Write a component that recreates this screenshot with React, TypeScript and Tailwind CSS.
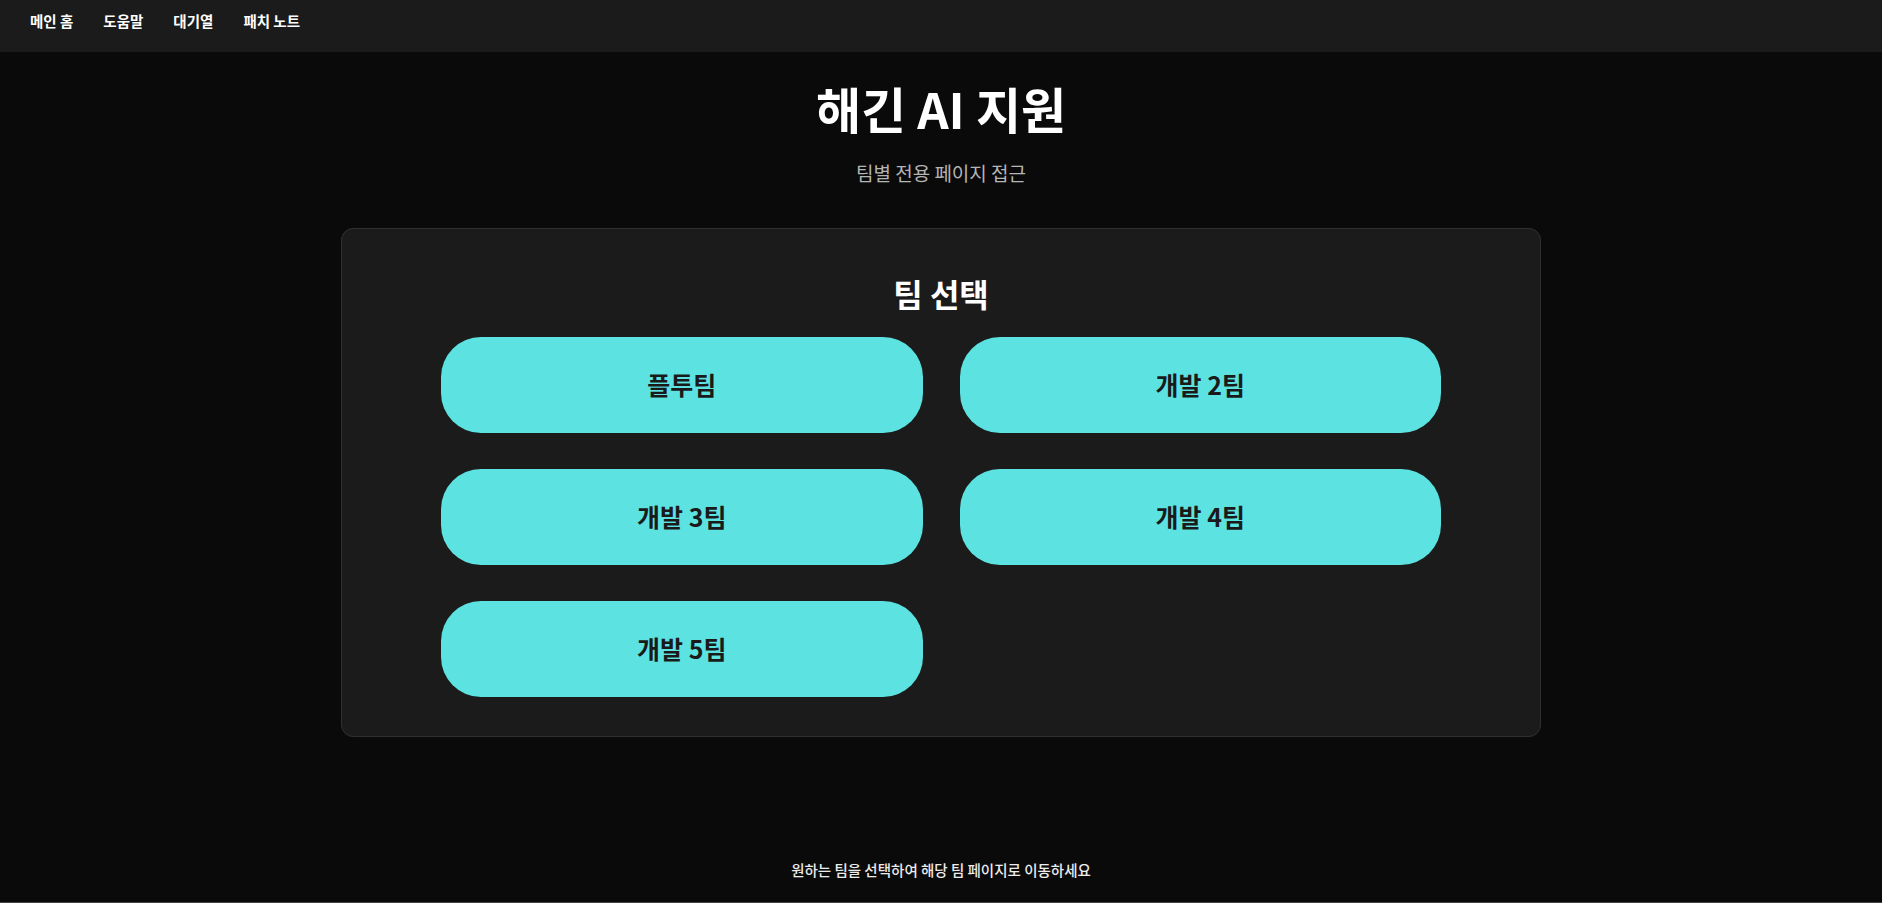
const teams = ["플투팀", "개발 2팀", "개발 3팀", "개발 4팀", "개발 5팀"];
const navItems = ["메인 홈", "도움말", "대기열", "패치 노트"];

const font = "font-['Noto_Sans_CJK_KR','Noto_Sans',sans-serif]";

export default function App() {
  return (
    <div className={`min-h-screen flex flex-col bg-[#0a0a0a] text-white ${font}`}>
      {/* Top nav */}
      <nav className="h-[52px] bg-[#1b1b1b] flex items-start pt-[11px] pl-[30px] gap-[30px]">
        {navItems.map((item) => (
          <a key={item} href="#" className="text-[14.5px] leading-5 font-bold text-white">
            {item}
          </a>
        ))}
      </nav>

      <main className="flex-1 flex flex-col items-center">
        <h1 className="mt-[27px] text-[49px] leading-[58px] font-bold">해긴 AI 지원</h1>
        <p className="mt-6 text-[19px] leading-6 text-[#b5b5b5]">팀별 전용 페이지 접근</p>

        {/* Team card */}
        <section className="mt-[43px] w-[1200px] bg-[#1b1b1b] border border-[#303030] rounded-xl pt-[44px] pb-[39px] flex flex-col items-center">
          <h2 className="text-[32px] leading-10 font-bold">팀 선택</h2>
          <div className="mt-6 w-[1000px] grid grid-cols-2 gap-x-[37px] gap-y-[36px]">
            {teams.map((team) => (
              <button
                key={team}
                className="h-[96px] rounded-[40px] bg-[#5ce3e1] text-[#1a1a1a] text-[25px] font-bold flex items-center justify-center"
              >
                {team}
              </button>
            ))}
          </div>
        </section>
      </main>

      <footer className="pb-[22px] border-b border-[#444] text-center">
        <p className="text-[14.5px] leading-5 font-medium text-[#ececec]">
          원하는 팀을 선택하여 해당 팀 페이지로 이동하세요
        </p>
      </footer>
    </div>
  );
}
